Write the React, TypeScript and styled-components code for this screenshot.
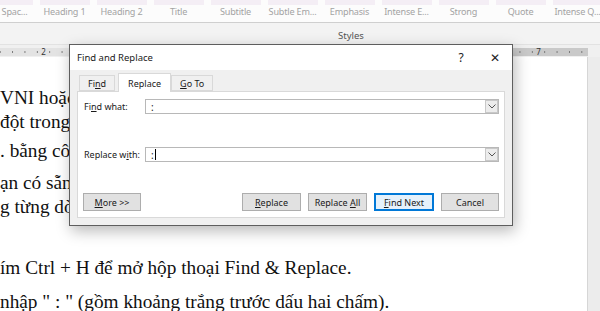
import React from 'react'
import styled, { createGlobalStyle } from 'styled-components'

const GlobalStyle = createGlobalStyle`
  html, body {
    margin: 0;
    padding: 0;
    width: 600px;
    height: 311px;
    overflow: hidden;
    background: #fff;
  }
`

const Screen = styled.div`
  position: relative;
  width: 600px;
  height: 311px;
  overflow: hidden;
  display: flex;
  flex-direction: column;
  font-family: 'Noto Sans', 'Open Sans', sans-serif;
`

/* ribbon */

const Ribbon = styled.div`
  background: #f3f3f3;
  border-bottom: 1px solid #e2e2e2;
`

const Gallery = styled.div`
  height: 22px;
  background: #fcfcfc;
  border-bottom: 1px solid #cfcfcf;
  display: flex;
  margin-left: -21px;
  overflow: hidden;
`

const StyleItem = styled.div`
  flex: 0 0 57px;
  display: flex;
  flex-direction: column;
  align-items: center;
`

const Swatch = styled.div`
  width: 50px;
  height: 5px;
  background: #f4eef5;
`

const StyleLabel = styled.div`
  margin-top: 1px;
  font-size: 9.1px;
  letter-spacing: -0.2px;
  line-height: 12px;
  color: #a3a3a3;
  white-space: nowrap;
`

const GroupLabel = styled.div`
  height: 21px;
  display: flex;
  align-items: flex-end;
  justify-content: center;
  padding-left: 102px;
  box-sizing: border-box;
  padding-bottom: 2px;
  font-size: 9.5px;
  color: #555;
`

/* ruler */

const RulerZone = styled.div`
  height: 18px;
  background: #f0f0f0;
  padding-top: 3px;
  box-sizing: border-box;
`

const RulerBand = styled.div`
  height: 8px;
  display: flex;
  margin-left: -6px;
`

const RulerUnit = styled.div<{ $margin?: boolean }>`
  flex: 0 0 99px;
  display: flex;
  justify-content: center;
  align-items: center;
  background-color: ${p => (p.$margin ? '#c9c9c9' : '#e3e3e3')};
  background-image: radial-gradient(circle, #777 0.6px, transparent 0.9px);
  background-size: 12.375px 8px;
  background-position: 0 0;
  font-size: 8px;
  line-height: 8px;
  color: #333;
`

const RulerNum = styled.span<{ $margin?: boolean }>`
  padding: 0 2px;
  background: ${p => (p.$margin ? '#c9c9c9' : '#e3e3e3')};
`

/* document */

const DocArea = styled.div`
  flex: 1;
  display: flex;
  background: #f0f0f0;
  padding-top: 1px;
`

const Page = styled.div`
  flex: 0 0 588px;
  background: #fff;
  border-right: 1px solid #d6d6d6;
  box-sizing: border-box;
  padding-top: 29px;
  font-family: 'Liberation Serif', 'Times New Roman', serif;
  font-size: 19.3px;
  color: #111;
  overflow: hidden;
`

const Para = styled.p<{ $gap?: number }>`
  margin: 0 0 ${p => p.$gap ?? 5}px 0;
  line-height: 24px;
  white-space: nowrap;
`

const Scroll = styled.div`
  flex: 1;
  background: #ececec;
`

/* dialog */

const Dialog = styled.div`
  position: absolute;
  left: 69px;
  top: 44px;
  width: 444px;
  height: 182px;
  box-sizing: border-box;
  border: 1px solid #5e5e5e;
  background: #f0f0f0;
  box-shadow: 2px 5px 14px rgba(0, 0, 0, 0.28);
  display: flex;
  flex-direction: column;
  font-size: 9px;
  color: #1a1a1a;
`

const TitleBar = styled.div`
  height: 25px;
  background: #fff;
  display: flex;
  align-items: center;
  padding-left: 7px;
  font-size: 9.5px;
`

const Title = styled.div`
  flex: 1;
`

const TitleBtn = styled.div`
  width: 34px;
  display: flex;
  justify-content: center;
  align-items: center;
  font-size: 12px;
  color: #222;
`

const Body = styled.div`
  flex: 1;
  padding: 3px 7px 7px 7px;
  display: flex;
  flex-direction: column;
`

const Tabs = styled.div`
  height: 18px;
  display: flex;
  align-items: flex-end;
  padding-left: 2px;
`

const Tab = styled.div<{ $active?: boolean }>`
  height: ${p => (p.$active ? 19 : 16)}px;
  padding: 0 ${p => (p.$active ? 9 : 8)}px;
  margin-right: ${p => (p.$active ? 0 : 3)}px;
  margin-bottom: ${p => (p.$active ? -1 : 0)}px;
  box-sizing: border-box;
  border: 1px solid #d9d9d9;
  border-bottom: ${p => (p.$active ? 'none' : '1px solid #d9d9d9')};
  background: ${p => (p.$active ? '#fff' : '#f0f0f0')};
  display: flex;
  align-items: center;
  position: relative;
  z-index: ${p => (p.$active ? 1 : 0)};
`

const Panel = styled.div`
  flex: 1;
  background: #fff;
  border: 1px solid #d9d9d9;
  padding: 7px 5px 6px 5px;
  display: flex;
  flex-direction: column;
`

const FieldRow = styled.div<{ $gap?: number }>`
  display: flex;
  align-items: center;
  margin-bottom: ${p => p.$gap ?? 0}px;
`

const FieldLabel = styled.div`
  width: 61px;
  padding-left: 1px;
`

const Combo = styled.div`
  flex: 1;
  height: 15px;
  box-sizing: border-box;
  border: 1px solid #b8b8b8;
  display: flex;
  align-items: center;
`

const ComboText = styled.div`
  flex: 1;
  padding-left: 5px;
  display: flex;
  align-items: center;
  font-size: 10px;
`

const Caret = styled.span`
  display: inline-block;
  width: 1px;
  height: 11px;
  background: #000;
  margin-left: 1px;
`

const DropBtn = styled.div`
  width: 13px;
  height: 13px;
  box-sizing: border-box;
  border: 1px solid #c8c8c8;
  background: #ececec;
  display: flex;
  align-items: center;
  justify-content: center;
`

const ButtonRow = styled.div`
  margin-top: auto;
  display: flex;
  gap: 7px;
`

const Button = styled.div<{ $w: number; $default?: boolean; $push?: boolean }>`
  width: ${p => p.$w}px;
  height: 18px;
  box-sizing: border-box;
  border: 1px solid ${p => (p.$default ? '#0078d7' : '#adadad')};
  box-shadow: ${p => (p.$default ? 'inset 0 0 0 1px #0078d7' : 'none')};
  background: ${p => (p.$default ? '#e5f1fb' : '#e1e1e1')};
  display: flex;
  align-items: center;
  justify-content: center;
  margin-right: ${p => (p.$push ? 'auto' : '0')};
  font-size: 9px;
  white-space: pre;
`

const Key = styled.span`
  text-decoration: underline;
`

const Chevron = () => (
  <svg width="8" height="5" viewBox="0 0 8 5">
    <path d="M0.5 0.5 L4 4 L7.5 0.5" fill="none" stroke="#555" strokeWidth="1" />
  </svg>
)

const galleryStyles = [
  'No Spac...',
  'Heading 1',
  'Heading 2',
  'Title',
  'Subtitle',
  'Subtle Em...',
  'Emphasis',
  'Intense E...',
  'Strong',
  'Quote',
  'Intense Q...',
]

// numbers 3-6 sit under the dialog, so only 2 and 7 get a label
const rulerUnits = [2, 3, 4, 5, 6, 7]
const shownNums = [2, 7]

export default function App() {
  return (
    <>
      <GlobalStyle />
      <Screen>
        <Ribbon>
          <Gallery>
            {galleryStyles.map(s => (
              <StyleItem key={s}>
                <Swatch />
                <StyleLabel>{s}</StyleLabel>
              </StyleItem>
            ))}
          </Gallery>
          <GroupLabel>Styles</GroupLabel>
        </Ribbon>

        <RulerZone>
          <RulerBand>
            {rulerUnits.map(n => (
              <RulerUnit key={n} $margin={n >= 7}>
                {shownNums.includes(n) && <RulerNum $margin={n >= 7}>{n}</RulerNum>}
              </RulerUnit>
            ))}
          </RulerBand>
        </RulerZone>

        <DocArea>
          <Page>
            <Para $gap={0}>VNI hoặc</Para>
            <Para>đột trong</Para>
            <Para $gap={8}>. bằng côn</Para>
            <Para $gap={0}>ạn có sẵn</Para>
            <Para $gap={37}>g từng dòn</Para>
            <Para $gap={10}>ím Ctrl + H để mở hộp thoại Find &amp; Replace.</Para>
            <Para>nhập " : " (gồm khoảng trắng trước dấu hai chấm).</Para>
          </Page>
          <Scroll />
        </DocArea>

        <Dialog>
          <TitleBar>
            <Title>Find and Replace</Title>
            <TitleBtn>?</TitleBtn>
            <TitleBtn>✕</TitleBtn>
          </TitleBar>
          <Body>
            <Tabs>
              <Tab>
                Fi<Key>n</Key>d
              </Tab>
              <Tab $active>Replace</Tab>
              <Tab>
                <Key>G</Key>o To
              </Tab>
            </Tabs>
            <Panel>
              <FieldRow $gap={33}>
                <FieldLabel>
                  Fi<Key>n</Key>d what:
                </FieldLabel>
                <Combo>
                  <ComboText>:</ComboText>
                  <DropBtn>
                    <Chevron />
                  </DropBtn>
                </Combo>
              </FieldRow>
              <FieldRow>
                <FieldLabel>
                  Replace w<Key>i</Key>th:
                </FieldLabel>
                <Combo>
                  <ComboText>
                    :<Caret />
                  </ComboText>
                  <DropBtn>
                    <Chevron />
                  </DropBtn>
                </Combo>
              </FieldRow>
              <ButtonRow>
                <Button $w={58} $push>
                  <span>
                    <Key>M</Key>ore &gt;&gt;
                  </span>
                </Button>
                <Button $w={59}>
                  <span>
                    <Key>R</Key>eplace
                  </span>
                </Button>
                <Button $w={59}>
                  <span>
                    Replace <Key>A</Key>ll
                  </span>
                </Button>
                <Button $w={60} $default>
                  <span>
                    <Key>F</Key>ind Next
                  </span>
                </Button>
                <Button $w={58}>Cancel</Button>
              </ButtonRow>
            </Panel>
          </Body>
        </Dialog>
      </Screen>
    </>
  )
}
